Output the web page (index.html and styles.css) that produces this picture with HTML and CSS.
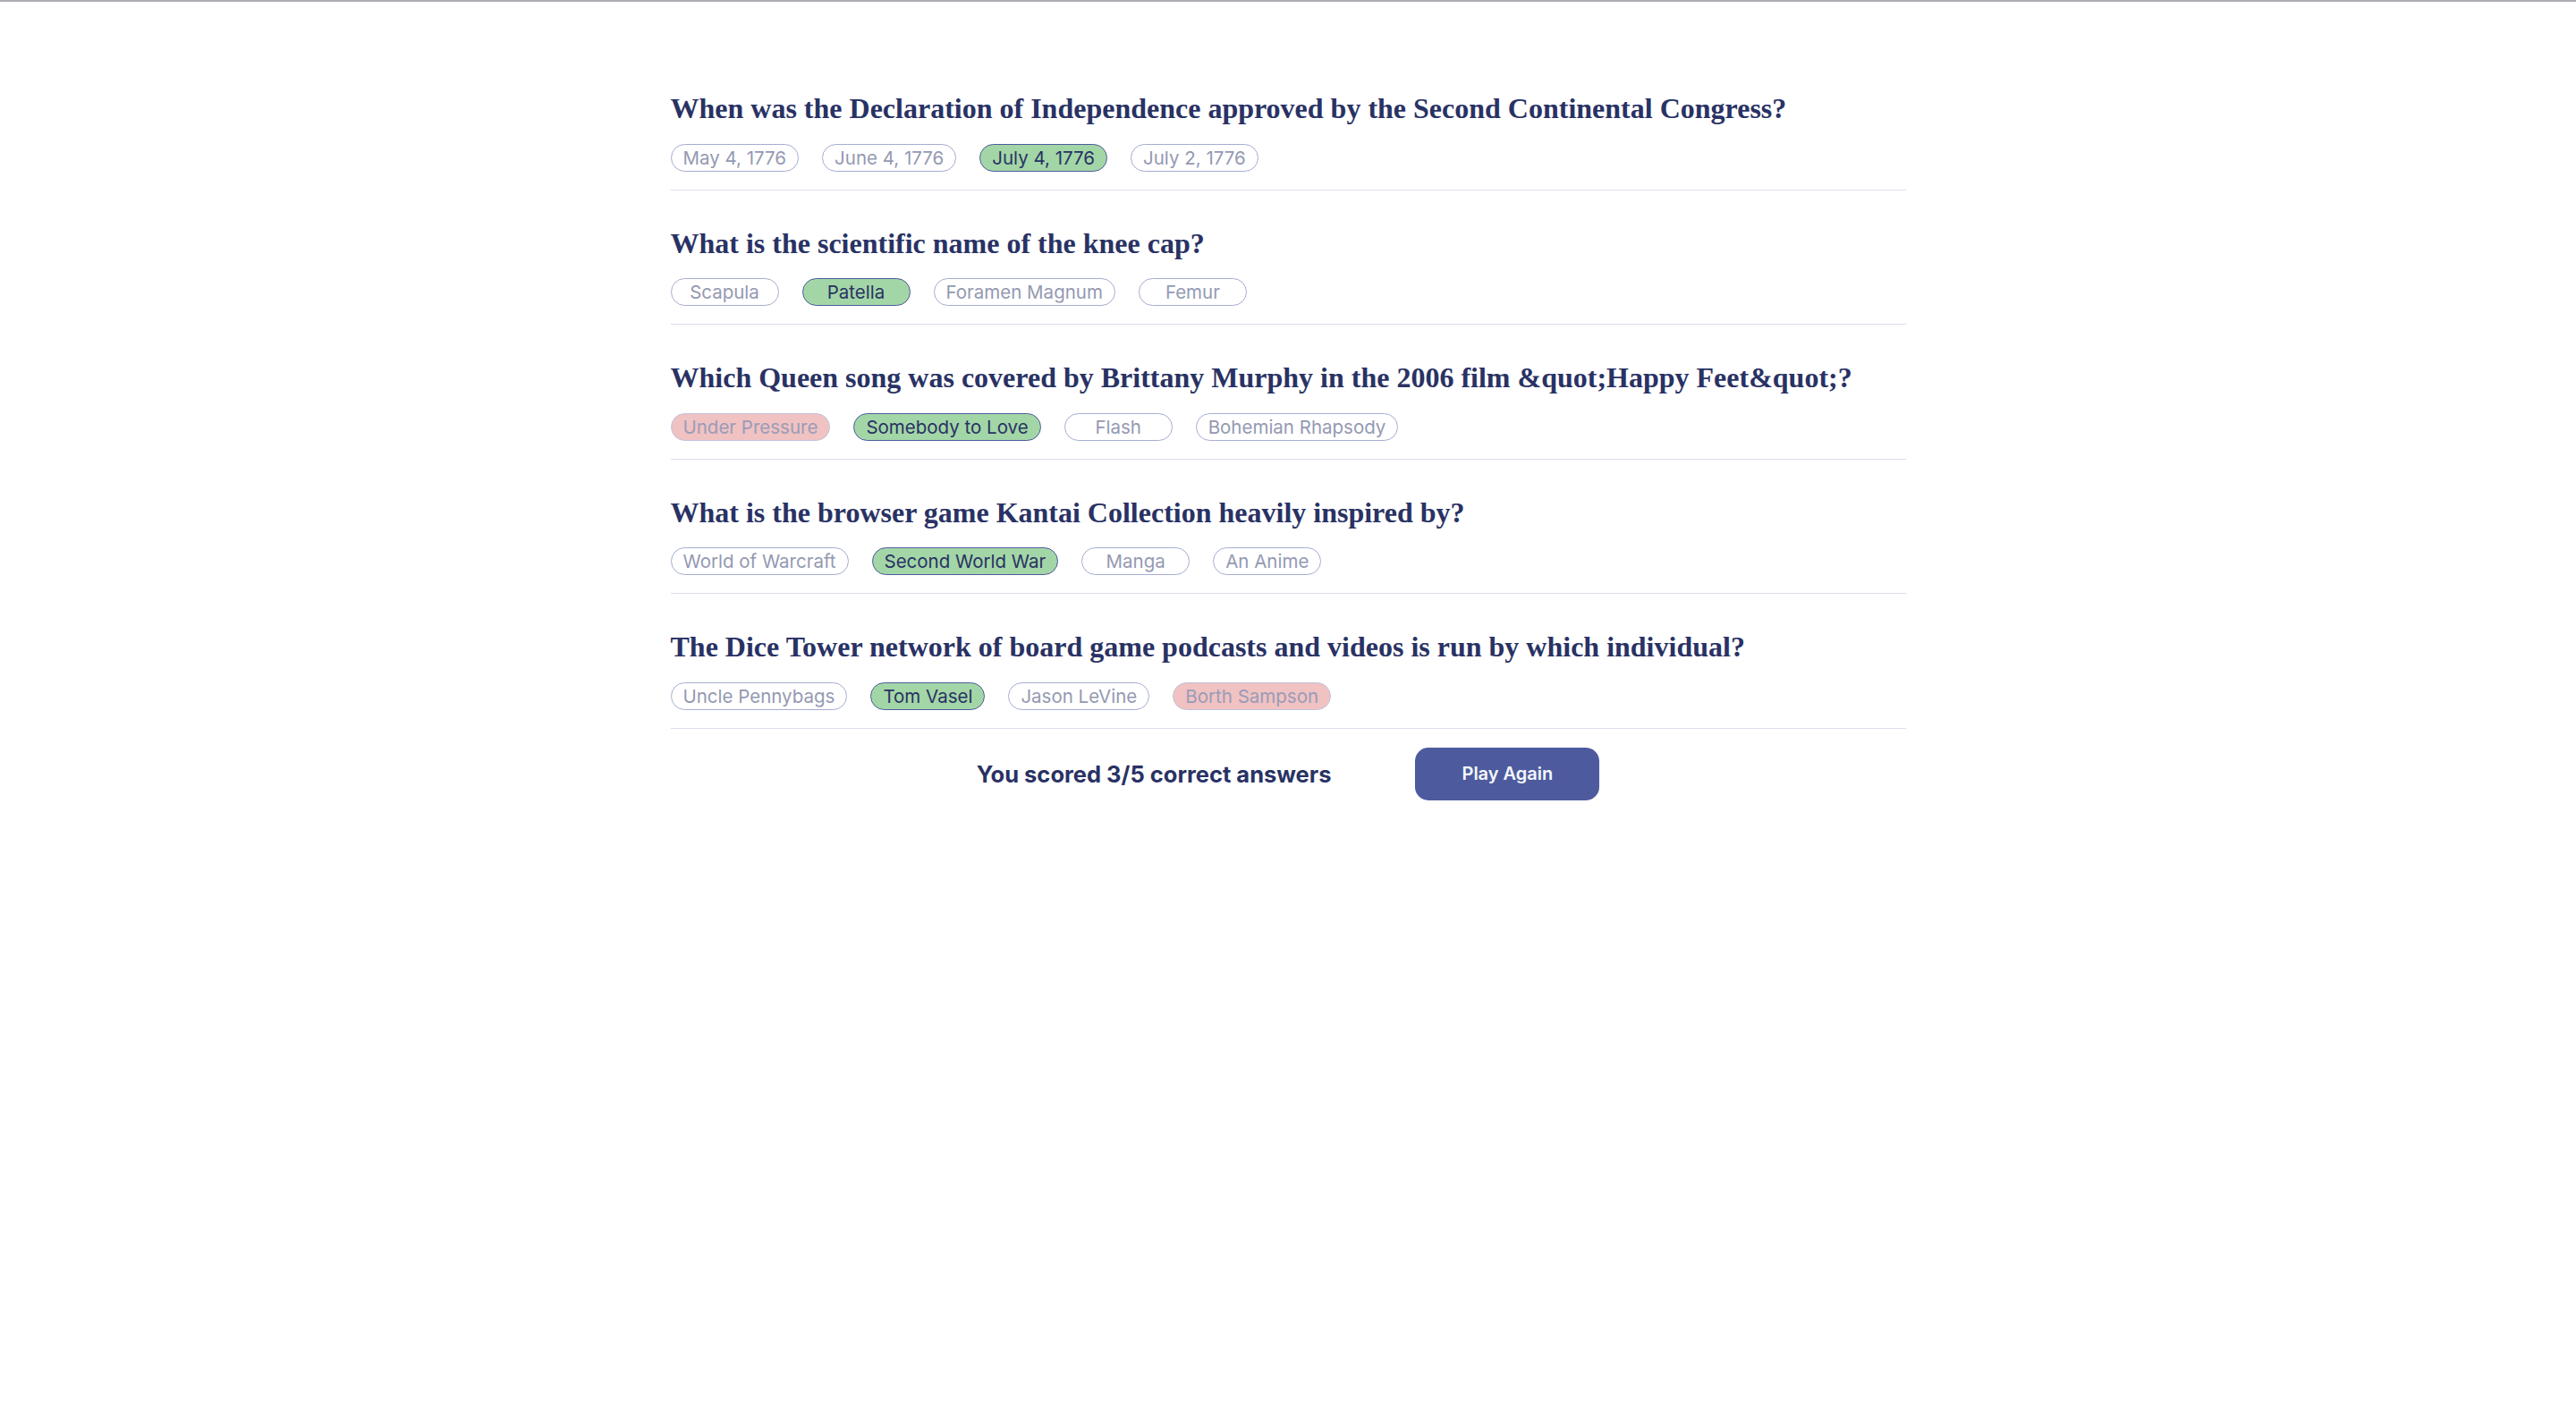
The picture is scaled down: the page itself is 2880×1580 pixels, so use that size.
FILE: index.html
```html
<!DOCTYPE html>
<html lang="en">
<head>
<meta charset="utf-8">
<title>Quizzical</title>
<link rel="stylesheet" href="styles.css">
</head>
<body>
<div class="topline"></div>
<main class="quiz">
  <section class="question">
    <h2 class="q-title">When was the Declaration of Independence approved by the Second Continental Congress?</h2>
    <div class="answers">
      <span class="pill">May 4, 1776</span>
      <span class="pill">June 4, 1776</span>
      <span class="pill correct">July 4, 1776</span>
      <span class="pill">July 2, 1776</span>
    </div>
  </section>
  <section class="question">
    <h2 class="q-title">What is the scientific name of the knee cap?</h2>
    <div class="answers">
      <span class="pill">Scapula</span>
      <span class="pill correct">Patella</span>
      <span class="pill">Foramen Magnum</span>
      <span class="pill">Femur</span>
    </div>
  </section>
  <section class="question">
    <h2 class="q-title">Which Queen song was covered by Brittany Murphy in the 2006 film &amp;quot;Happy Feet&amp;quot;?</h2>
    <div class="answers">
      <span class="pill wrong">Under Pressure</span>
      <span class="pill correct">Somebody to Love</span>
      <span class="pill">Flash</span>
      <span class="pill">Bohemian Rhapsody</span>
    </div>
  </section>
  <section class="question">
    <h2 class="q-title">What is the browser game Kantai Collection heavily inspired by?</h2>
    <div class="answers">
      <span class="pill">World of Warcraft</span>
      <span class="pill correct">Second World War</span>
      <span class="pill">Manga</span>
      <span class="pill">An Anime</span>
    </div>
  </section>
  <section class="question">
    <h2 class="q-title">The Dice Tower network of board game podcasts and videos is run by which individual?</h2>
    <div class="answers">
      <span class="pill">Uncle Pennybags</span>
      <span class="pill correct">Tom Vasel</span>
      <span class="pill">Jason LeVine</span>
      <span class="pill wrong">Borth Sampson</span>
    </div>
  </section>
  <div class="result">
    <p class="score">You scored 3/5 correct answers</p>
    <button class="again">Play Again</button>
  </div>
</main>
</body>
</html>
```

FILE: styles.css
```css
html, body {
  margin: 0;
  padding: 0;
  background: #ffffff;
}

body {
  font-family: Inter, "Noto Sans", sans-serif;
  color: #293264;
}

.topline {
  height: 2px;
  background: #adadb4;
}

.quiz {
  width: 1381px;
  margin: 0 auto;
  padding-top: 102px;
}

.question {
  padding-bottom: 20px;
  border-bottom: 1px solid #dbdef0;
  margin-bottom: 42px;
}

.q-title {
  margin: 0 0 21px;
  font-family: "Liberation Serif", "Times New Roman", serif;
  font-weight: 700;
  font-size: 32px;
  line-height: 35.6px;
  color: #293264;
}

.answers {
  display: flex;
  gap: 26px;
}

.pill {
  box-sizing: border-box;
  min-width: 121px;
  text-align: center;
  padding: 3px 13px;
  border: 1px solid #a6add0;
  border-radius: 16px;
  font-size: 20.5px;
  line-height: 23px;
  color: #9499b2;
  background: #ffffff;
}

.pill.correct {
  background: #a3d6a6;
  border-color: #4d5b9e;
  color: #293264;
}

.pill.wrong {
  background: #f0c2c2;
  border-color: #bfc3dc;
  color: #9a9cb8;
}

.result {
  margin-top: -21px;
  display: flex;
  justify-content: center;
  align-items: center;
  gap: 94px;
}

.score {
  margin: 0;
  font-size: 25.5px;
  font-weight: 700;
  color: #293264;
}

.again {
  border: none;
  border-radius: 15px;
  background: #4d5b9e;
  color: #f5f7fb;
  font-family: Inter, "Noto Sans", sans-serif;
  font-size: 20px;
  font-weight: 600;
  line-height: 24px;
  padding: 17px 52px 18px;
}
```
